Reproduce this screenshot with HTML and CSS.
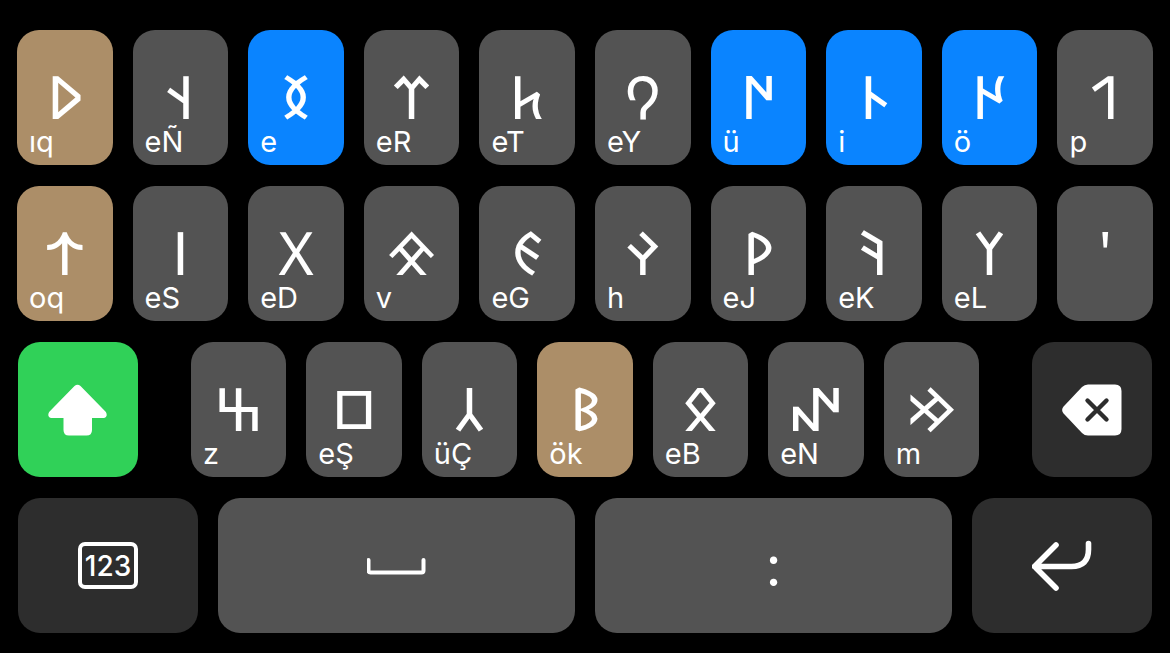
FILE: index.html
```html
<!DOCTYPE html>
<html lang="otk">
<head>
<meta charset="utf-8">
<meta name="viewport" content="width=device-width, initial-scale=1">
<title>Old Turkic Keyboard</title>
<link rel="stylesheet" href="styles.css">
</head>
<body>
<main class="keyboard">
  <div class="row row-ten">
    <button class="key sand"><span class="glyph">&#x10C37;</span><span class="hint">ıq</span></button>
    <button class="key"><span class="glyph">&#x10C2D;</span><span class="hint">eÑ</span></button>
    <button class="key blue"><span class="glyph">&#x10C05;</span><span class="hint">e</span></button>
    <button class="key"><span class="glyph">&#x10C3C;</span><span class="hint">eR</span></button>
    <button class="key"><span class="glyph">&#x10C45;</span><span class="hint">eT</span></button>
    <button class="key"><span class="glyph">&#x10C18;</span><span class="hint">eY</span></button>
    <button class="key blue"><span class="glyph">&#x10C07;</span><span class="hint">ü</span></button>
    <button class="key blue"><span class="glyph">&#x10C04;</span><span class="hint">i</span></button>
    <button class="key blue"><span class="glyph">&#x10C08;</span><span class="hint">ö</span></button>
    <button class="key"><span class="glyph">&#x10C2F;</span><span class="hint">p</span></button>
  </div>
  <div class="row row-ten">
    <button class="key sand"><span class="glyph">&#x10C39;</span><span class="hint">oq</span></button>
    <button class="key"><span class="glyph">&#x10C3E;</span><span class="hint">eS</span></button>
    <button class="key"><span class="glyph">&#x10C13;</span><span class="hint">eD</span></button>
    <button class="key"><span class="glyph">&#x10C0C;</span><span class="hint">v</span></button>
    <button class="key"><span class="glyph">&#x10C0F;</span><span class="hint">eG</span></button>
    <button class="key"><span class="glyph">&#x10C1B;</span><span class="hint">h</span></button>
    <button class="key"><span class="glyph">&#x10C19;</span><span class="hint">eJ</span></button>
    <button class="key"><span class="glyph">&#x10C1A;</span><span class="hint">eK</span></button>
    <button class="key"><span class="glyph">&#x10C20;</span><span class="hint">eL</span></button>
    <button class="key"><span class="glyph">'</span></button>
  </div>
  <div class="row row-shift">
    <button class="key green" aria-label="Shift">
      <svg class="icon" viewBox="0 0 60 52" aria-hidden="true"><path fill="#fff" d="M26.500 2q3-2.600 6 0L57.900 28q2.400 5-2.400 6H44V46q0 5.500-5.500 5.500H21Q15.500 51.500 15.500 46V34H3.500q-4.800-1-2.400-6z"/></svg>
    </button>
    <div class="row row-seven">
      <button class="key"><span class="glyph">&#x10C15;</span><span class="hint">z</span></button>
      <button class="key"><span class="glyph">&#x10C3F;</span><span class="hint">eŞ</span></button>
      <button class="key"><span class="glyph">&#x10C32;</span><span class="hint">üÇ</span></button>
      <button class="key sand"><span class="glyph">&#x10C1D;</span><span class="hint">ök</span></button>
      <button class="key"><span class="glyph">&#x10C0B;</span><span class="hint">eB</span></button>
      <button class="key"><span class="glyph">&#x10C25;</span><span class="hint">eN</span></button>
      <button class="key"><span class="glyph">&#x10C22;</span><span class="hint">m</span></button>
    </div>
    <button class="key dark" aria-label="Delete">
      <svg class="icon" viewBox="0 0 60 52" aria-hidden="true"><path fill="#fff" d="M26 .500H53q6.500 0 6.500 6.500V45q0 6.500-6.500 6.500H26q-3.500 0-6-2.500L1.600 29.500q-3-3.500 0-7L20 3q2.500-2.500 6-2.500z"/><path fill="none" stroke="#2d2d2d" stroke-width="4.400" stroke-linecap="round" d="M25.500 16.500l19 19M44.500 16.500l-19 19"/></svg>
    </button>
  </div>
  <div class="row row-space">
    <button class="key dark"><span class="numbers">123</span></button>
    <button class="key" aria-label="Space">
      <svg class="icon" viewBox="0 0 60 52" aria-hidden="true"><path fill="none" stroke="#fff" stroke-width="4" stroke-linecap="round" stroke-linejoin="round" d="M1.500 20V30.500q0 2 2 2H54.500q2 0 2-2V20"/></svg>
    </button>
    <button class="key"><span class="colon">:</span></button>
    <button class="key dark" aria-label="Return">
      <svg class="icon" viewBox="0 0 60 52" aria-hidden="true"><path fill="none" stroke="#fff" stroke-width="5.600" stroke-linecap="round" stroke-linejoin="round" d="M24 5L2.500 26.500 24 48M2.500 26.500H39.500Q56.500 26.500 56.500 9.500V3.500"/></svg>
    </button>
  </div>
</main>
</body>
</html>
```
FILE: styles.css
```css
* {
  box-sizing: border-box;
}

body {
  margin: 0;
  background: #000;
}

.keyboard {
  display: grid;
  grid-auto-rows: 1fr;
  gap: 21px;
  min-height: 100vh;
  padding: 30px 17px 20px;
}

.row {
  display: grid;
  column-gap: 20px;
}

.row-ten {
  grid-template-columns: repeat(10, 1fr);
}

.row-seven {
  grid-template-columns: repeat(7, 1fr);
}

.row-shift {
  grid-template-columns: 120fr 789fr 120fr;
  column-gap: 53px;
  padding: 0 1px;
}

.row-space {
  grid-template-columns: 180fr 357fr 357fr 180fr;
  padding: 0 1px;
}

.key {
  display: grid;
  grid-template: 1fr / 1fr;
  min-width: 0;
  padding: 0;
  border: 0;
  border-radius: 22px;
  background: #535353;
  color: #fff;
  font: 400 29px/28px Inter, "Open Sans", sans-serif;
}

.key > * {
  grid-area: 1 / 1;
  place-self: center;
}

.sand {
  background: #ac8e68;
}

.blue {
  background: #0a84ff;
}

.green {
  background: #30d158;
}

.dark {
  background: #2d2d2d;
}

.glyph {
  padding-bottom: 4px;
  font: 60px/48px "Noto Sans Old Turkic", "Noto Sans", sans-serif;
}

.key > .hint {
  place-self: end start;
  padding: 0 0 9px 12px;
}

.icon {
  width: 60px;
  height: 52px;
}

.numbers {
  padding: 6px 3px 5px;
  border: 4px solid #fff;
  border-radius: 7px;
  font-size: 28px;
  font-weight: 500;
}

.colon {
  font-size: 56px;
  line-height: 60px;
}
```
